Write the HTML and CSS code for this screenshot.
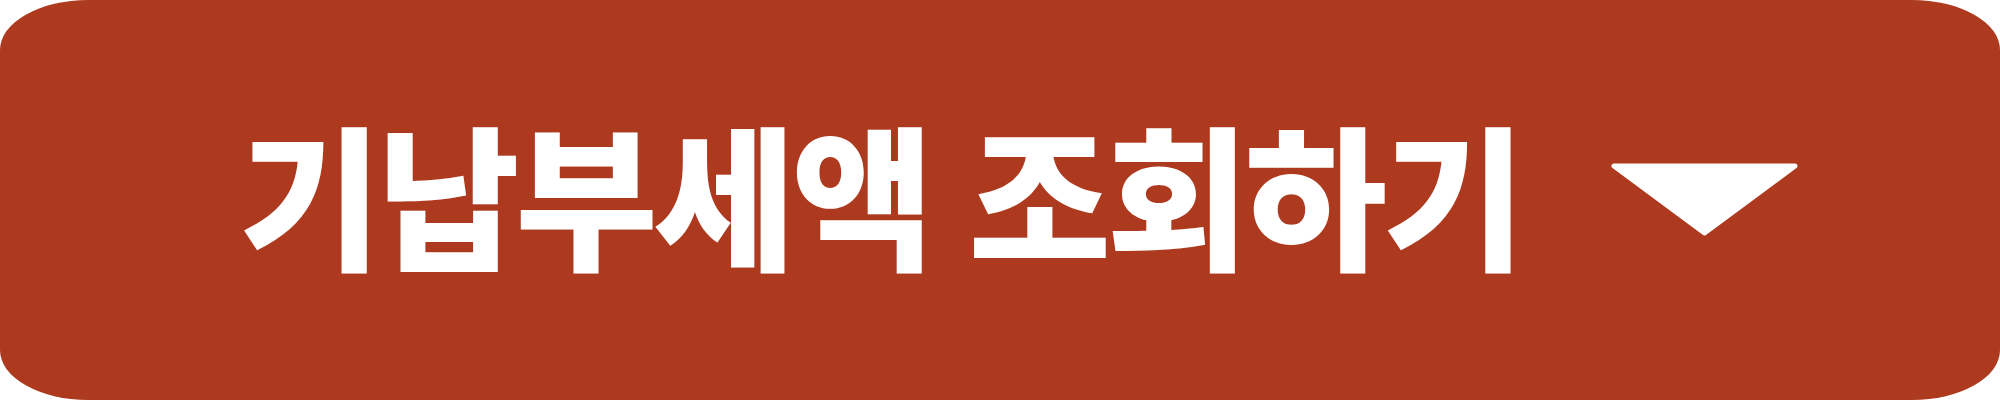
FILE: index.html
```html
<!DOCTYPE html>
<html lang="ko">
<head>
<meta charset="utf-8">
<link rel="stylesheet" href="styles.css">
</head>
<body>
<button class="lookup-btn" type="button">
  <span class="lookup-label">기납부세액 조회하기</span>
  <svg class="lookup-caret" width="187" height="73" viewBox="0 0 187 73" aria-hidden="true">
    <path d="M3 3 L184 3 L93.5 70 Z" fill="#ffffff" stroke="#ffffff" stroke-width="5" stroke-linejoin="round"/>
  </svg>
</button>
</body>
</html>
```

FILE: styles.css
```css
html, body {
  margin: 0;
  padding: 0;
  background: #ffffff;
}

.lookup-btn {
  display: flex;
  align-items: center;
  width: 2000px;
  height: 400px;
  margin: 0;
  padding: 0 202px 0 239px;
  box-sizing: border-box;
  border: none;
  border-radius: 88px / 50px;
  background: #ad391e;
  color: #ffffff;
  cursor: pointer;
}

.lookup-label {
  flex: none;
  font-family: "Noto Sans CJK KR", "Noto Sans", sans-serif;
  font-weight: 900;
  font-size: 155px;
  line-height: 1;
  letter-spacing: -4.5px;
  white-space: nowrap;
  padding-bottom: 20px;
}

.lookup-caret {
  flex: none;
  display: block;
  margin-left: auto;
  margin-top: -2px;
}
```
